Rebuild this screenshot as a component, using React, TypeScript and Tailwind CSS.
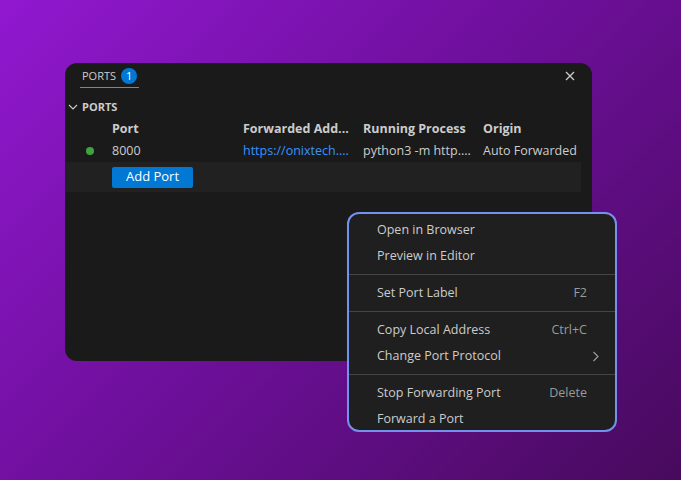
import React from "react";

const font = { fontFamily: '"Open Sans", "Noto Sans", sans-serif' };

function MenuItem({ label, shortcut, chevron }: { label: string; shortcut?: string; chevron?: boolean }) {
  return (
    <div className="relative flex h-[26px] shrink-0 items-center pl-[28px] pr-[28px]">
      <span className="flex-1 text-[12.5px] text-[#cccccc]">{label}</span>
      {shortcut && <span className="text-[12.5px] text-[#9a9a9a]">{shortcut}</span>}
      {chevron && (
        <svg className="absolute right-[15px] top-[8px]" width="8" height="11" viewBox="0 0 8 11" fill="none">
          <path d="M1.5 1 L6 5.5 L1.5 10" stroke="#a0a0a0" strokeWidth="1.1" />
        </svg>
      )}
    </div>
  );
}

function Sep() {
  return (
    <div className="flex h-[11px] shrink-0 items-center">
      <div className="h-px w-full bg-[#454545]" />
    </div>
  );
}

export default function App() {
  return (
    <div
      className="relative h-[480px] w-[681px] overflow-hidden bg-[linear-gradient(135deg,#9118d0_0%,#6c0f98_50%,#470a5c_100%)] pt-[63px] pl-[65px]"
      style={font}
    >
      <div className="flex h-[298px] w-[527px] flex-col rounded-[12px] bg-[#1a1a1a]">
        {/* tab row */}
        <div className="flex h-[25px] items-end justify-between pl-[15px] pr-[17px]">
          <div className="flex h-[25px] items-center gap-[5px] border-b border-[#3794ff] px-[2px] pt-[2px]">
            <span className="text-[11px] text-[#cccccc]">PORTS</span>
            <span className="flex h-[16px] w-[16px] items-center justify-center rounded-full bg-[#0078d4] text-[11px] text-white">1</span>
          </div>
          <svg className="mb-[7px]" width="10" height="10" viewBox="0 0 10 10">
            <path d="M1 1 L9 9 M9 1 L1 9" stroke="#cccccc" strokeWidth="1.3" />
          </svg>
        </div>
        {/* section header */}
        <div className="mt-[8px] flex h-[22px] items-center pl-[3px]">
          <svg width="10" height="8" viewBox="0 0 10 8" className="mr-[4px]">
            <path d="M1 2 L5 6 L9 2" stroke="#cccccc" strokeWidth="1.1" fill="none" />
          </svg>
          <span className="text-[11px] font-bold text-[#cccccc]">PORTS</span>
        </div>
        {/* table header */}
        <div className="flex h-[22px] items-center text-[12.5px] font-bold text-[#cccccc]">
          <div className="w-[47px]" />
          <div className="w-[131px]">Port</div>
          <div className="w-[120px] truncate pr-[8px]">Forwarded Add...</div>
          <div className="w-[120px]">Running Process</div>
          <div>Origin</div>
        </div>
        {/* data row */}
        <div className="flex h-[22px] items-center text-[12.5px] text-[#cccccc]">
          <div className="flex w-[47px] justify-center pl-[3px]">
            <div className="h-[8px] w-[8px] rounded-full bg-[#3fa33f]" />
          </div>
          <div className="w-[131px]">8000</div>
          <div className="w-[120px] text-[#3794ff]">https://onixtech....</div>
          <div className="w-[120px]">python3 -m http....</div>
          <div>Auto Forwarded</div>
        </div>
        {/* add port row */}
        <div className="flex h-[30px] w-[516px] items-center bg-[#212121] pl-[47px]">
          <button className="flex h-[21px] w-[81px] items-center justify-center rounded-[2px] bg-[#0078d4] text-[13px] text-white">
            Add Port
          </button>
        </div>
      </div>

      {/* context menu */}
      <div className="absolute left-[347px] top-[212px] flex h-[220px] w-[270px] flex-col overflow-hidden rounded-[12px] border-2 border-[#7391ee] bg-[#1f1f1f] pt-[3px]">
        <MenuItem label="Open in Browser" />
        <MenuItem label="Preview in Editor" />
        <Sep />
        <MenuItem label="Set Port Label" shortcut="F2" />
        <Sep />
        <MenuItem label="Copy Local Address" shortcut="Ctrl+C" />
        <MenuItem label="Change Port Protocol" chevron />
        <Sep />
        <MenuItem label="Stop Forwarding Port" shortcut="Delete" />
        <MenuItem label="Forward a Port" />
      </div>
    </div>
  );
}
